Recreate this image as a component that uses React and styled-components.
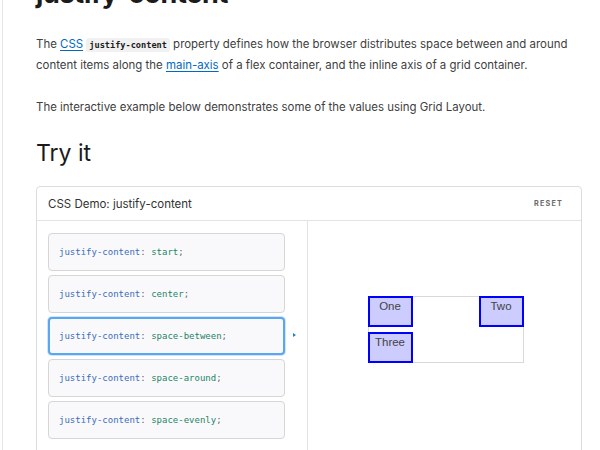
import React, { useState } from 'react'
import styled, { createGlobalStyle } from 'styled-components'

const GlobalStyle = createGlobalStyle`
  html, body {
    margin: 0;
    padding: 0;
    background: #ffffff;
    overflow: hidden;
  }
  body {
    font-family: Inter, "Noto Sans", sans-serif;
    color: #1b1b1b;
  }
`

const Page = styled.div`
  margin-left: 2px;
  border-left: 1px solid #e6e6e6;
  height: 450px;
  padding: 0 16px 0 33px;
  overflow: hidden;
`

const Title = styled.h1`
  margin: -23px 0 0;
  font-size: 27px;
  line-height: 34px;
  font-weight: 700;
  letter-spacing: -0.3px;
  color: #1b1b1b;
`

const Para = styled.p`
  margin: ${(p) => p.$top || 0}px 0 0;
  font-size: 11.45px;
  line-height: 20px;
  color: #404040;
`

const TextLink = styled.a`
  color: #0069c2;
  text-decoration: underline;
  text-underline-offset: 2px;
`

const InlineCode = styled.code`
  font-family: "DejaVu Sans Mono", "Liberation Mono", monospace;
  font-size: 8.6px;
  font-weight: 700;
  background: #f2f1f1;
  border-radius: 3px;
  padding: 2px 3px;
  color: #1b1b1b;
`

const SubTitle = styled.h2`
  margin: 21px 0 0;
  font-size: 23px;
  line-height: 30px;
  font-weight: 400;
  color: #1b1b1b;
`

const Demo = styled.section`
  margin-top: 18px;
  border: 1px solid #dcdcdc;
  border-radius: 4px;
  width: 544px;
`

const DemoHeader = styled.header`
  height: 33px;
  display: flex;
  align-items: center;
  justify-content: space-between;
  padding: 0 18px 0 11px;
  border-bottom: 1px solid #e3e3e3;
`

const DemoTitle = styled.span`
  font-size: 11.5px;
  color: #333;
`

const ResetButton = styled.button`
  border: 0;
  background: none;
  padding: 0;
  font-family: Inter, "Noto Sans", sans-serif;
  font-size: 7.2px;
  font-weight: 700;
  letter-spacing: 1.2px;
  color: #6a6a6a;
  cursor: pointer;
`

const DemoBody = styled.div`
  display: grid;
  grid-template-columns: 271px 1fr;
`

const Choices = styled.div`
  display: flex;
  flex-direction: column;
  gap: 4px;
  padding: 12px 22px 14px 11px;
  border-right: 1px solid #e3e3e3;
`

const Choice = styled.div`
  position: relative;
  height: 38px;
  box-sizing: border-box;
  display: flex;
  align-items: center;
  padding-left: ${(p) => (p.$active ? 9 : 10)}px;
  background: #f9f9fb;
  border: ${(p) => (p.$active ? '2px solid #5aa6f0' : '1px solid #d6d6d6')};
  box-shadow: ${(p) => (p.$active ? '0 0 0 1px #cfe5fb' : 'none')};
  border-radius: 4px;
  font-family: "DejaVu Sans Mono", "Liberation Mono", monospace;
  font-size: 9px;
  cursor: pointer;
`

const Prop = styled.span`
  color: #3a6cc0;
`

const Value = styled.span`
  color: #1f8466;
`

const Punct = styled.span`
  color: #666;
`

const Marker = styled.span`
  position: absolute;
  right: -13px;
  top: 50%;
  margin-top: -3px;
  width: 0;
  height: 0;
  border-top: 2.5px solid transparent;
  border-bottom: 2.5px solid transparent;
  border-left: 3px solid #1a7fe0;
`

const Output = styled.div`
  display: flex;
  justify-content: center;
  align-items: flex-start;
  padding: 75px 0 0 2px;
`

const Example = styled.div`
  width: 156px;
  box-sizing: border-box;
  border: 1px solid #d9d9d9;
  display: grid;
  grid-template-columns: 43px 43px;
  grid-auto-rows: 29px;
  row-gap: 7px;
  justify-content: ${(p) => p.$justify};
`

const Item = styled.div`
  box-sizing: border-box;
  background: #ccccff;
  border: 2px solid #0000ff;
  margin: -1px;
  text-align: center;
  font-family: "Liberation Sans", Arial, sans-serif;
  font-size: 11.5px;
  line-height: 16px;
  color: #444;
`

const values = ['start', 'center', 'space-between', 'space-around', 'space-evenly']

export default function App() {
  const [current, setCurrent] = useState('space-between')

  return (
    <>
      <GlobalStyle />
      <Page>
        <Title>justify-content</Title>
        <Para $top={23}>
          The <TextLink href="#">CSS</TextLink> <InlineCode>justify-content</InlineCode> property
          defines how the browser distributes space between and around content items along the{' '}
          <TextLink href="#">main-axis</TextLink> of a flex container, and the inline axis of a
          grid container.
        </Para>
        <Para $top={22}>
          The interactive example below demonstrates some of the values using Grid Layout.
        </Para>
        <SubTitle>Try it</SubTitle>
        <Demo>
          <DemoHeader>
            <DemoTitle>CSS Demo: justify-content</DemoTitle>
            <ResetButton onClick={() => setCurrent('space-between')}>RESET</ResetButton>
          </DemoHeader>
          <DemoBody>
            <Choices>
              {values.map((v) => (
                <Choice key={v} $active={v === current} onClick={() => setCurrent(v)}>
                  <Prop>justify-content</Prop>
                  <Punct>:</Punct>&nbsp;
                  <Value>{v}</Value>
                  <Punct>;</Punct>
                  {v === current && <Marker />}
                </Choice>
              ))}
            </Choices>
            <Output>
              <Example $justify={current}>
                <Item>One</Item>
                <Item>Two</Item>
                <Item>Three</Item>
              </Example>
            </Output>
          </DemoBody>
        </Demo>
      </Page>
    </>
  )
}
